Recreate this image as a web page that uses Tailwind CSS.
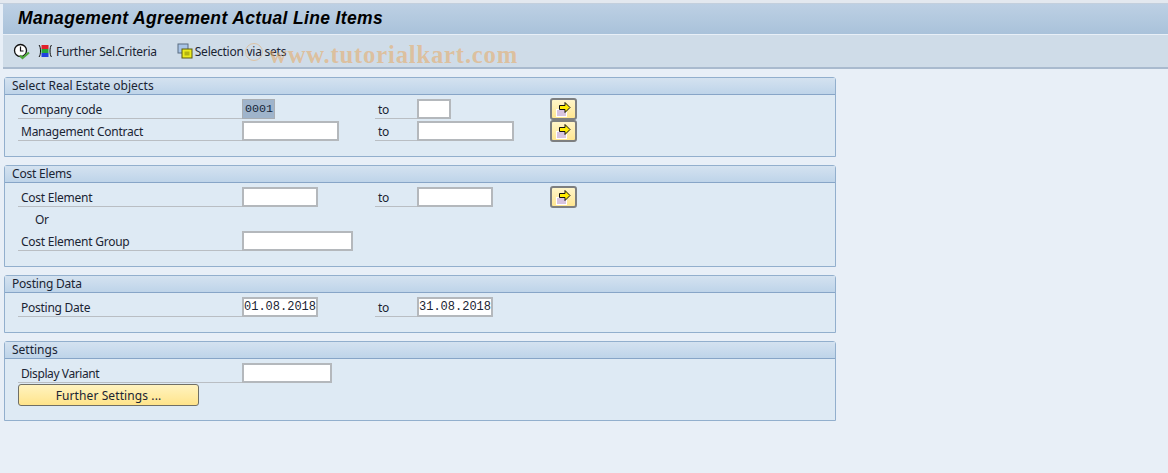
<!DOCTYPE html>
<html lang="en">
<head>
    <meta charset="UTF-8">
    <title>Management Agreement Actual Line Items</title>
    <script src="https://cdn.jsdelivr.net/npm/@tailwindcss/browser@4"></script>
</head>
<body class="relative w-[1168px] h-[473px] overflow-hidden bg-[#e8eff7] font-['Noto_Sans','Liberation_Sans',sans-serif] text-[12px] tracking-[-0.25px] text-[#1a2433]">

    <div class="h-[4px] bg-[#e3e8ef] border-b border-[#c3cfdd]"></div>

    <!-- title bar -->
    <div class="h-[31px] ml-[3px] pb-[2px] bg-gradient-to-b from-[#bdd0e4] to-[#a9c2da] border-b border-[#e8eff7] flex items-center pl-[15px]">
        <h1 class="font-['Liberation_Sans',sans-serif] text-[17.5px] font-bold italic text-black tracking-[0.35px]">Management Agreement Actual Line Items</h1>
    </div>

    <!-- toolbar -->
    <div class="h-[34px] ml-[3px] bg-[#cfdce8] border-b-2 border-[#a9bace] flex items-center">
        <svg class="ml-[10px] w-[17px] h-[17px]" viewBox="0 0 17 17">
            <circle cx="7.500" cy="7.500" r="6" fill="#fff" stroke="#111" stroke-width="1.300"/>
            <path d="M7.500 3.500v4.500h3" fill="none" stroke="#111" stroke-width="1.200"/>
            <path d="M7 12.500l2.500 2.500 6.500-5.500" fill="none" stroke="#4ea83a" stroke-width="2.200"/>
        </svg>
        <svg class="ml-[7px] w-[16px] h-[16px]" viewBox="0 0 16 16">
            <path d="M2 2c2 2 2 10 0 12M14.500 2c-2 2-2 10 0 12" fill="none" stroke="#111"/>
            <rect x="4.500" y="2" width="7" height="4" fill="#e0202a"/>
            <rect x="4.500" y="6" width="7" height="4" fill="#25a83a"/>
            <rect x="4.500" y="10" width="7" height="4" fill="#2040e0"/>
        </svg>
        <span class="ml-[3px] mt-[1px]">Further Sel.Criteria</span>
        <svg class="ml-[20px] w-[16px] h-[16px]" viewBox="0 0 16 16">
            <rect x="1" y="1" width="10" height="9" fill="#a9c4e6" stroke="#5a6c80"/>
            <rect x="5" y="6" width="10" height="9" fill="#ecec1e" stroke="#5a5a10"/>
            <rect x="7.500" y="8.500" width="5" height="4" fill="#b3b312"/>
        </svg>
        <span class="ml-[2px] mt-[1px]">Selection via sets</span>
    </div>

    <!-- Select Real Estate objects -->
    <section class="ml-[4px] mt-[8px] w-[832px] h-[80px] border border-[#92afcd] rounded-t-[3px] bg-[#deeaf4]">
        <div class="h-[17px] pl-[7px] flex items-center tracking-normal bg-gradient-to-b from-[#d4e2f0] to-[#bed4e9] border-b border-[#87a5c7]">Select Real Estate objects</div>
        <div class="mt-[3px] ml-[13px] grid grid-cols-[224px_133px_42px_133px_27px] auto-rows-[22px]">
            <div class="border-b border-[#b9bec3] pl-[3px] h-[21px] leading-[24px]">Company code</div>
            <div><div class="mt-[1px] w-[33px] h-[20px] border border-[#a9aeb3] bg-[#9fb4cb] pl-[2px] font-['Liberation_Mono',monospace] text-[11.7px] tracking-normal leading-[18px] text-[#16263a]">0001</div></div>
            <div class="border-b border-[#b9bec3] pl-[3px] h-[21px] leading-[24px]">to</div>
            <div><div class="mt-[1px] w-[34px] h-[20px] border-2 border-[#b4b8bc] bg-white"></div></div>
            <button class="w-[27px] h-[22px] border-2 border-[#7d7f80] rounded-[3px] bg-gradient-to-b from-[#fff5c8] to-[#ffe690] flex items-center justify-center">
                <svg class="w-[15px] h-[15px]" viewBox="0 0 15 15"><rect x="0.500" y="7.500" width="10" height="7" fill="#d8c4e0" stroke="#fff"/><path d="M3.500 3.500H9V.5L14 5.500 9 10.500V7.500H3.500Z" fill="#ffec00" stroke="#111"/></svg>
            </button>
            <div class="border-b border-[#b9bec3] pl-[3px] h-[21px] leading-[24px]">Management Contract</div>
            <div><div class="mt-[1px] w-[97px] h-[20px] border-2 border-[#b4b8bc] bg-white"></div></div>
            <div class="border-b border-[#b9bec3] pl-[3px] h-[21px] leading-[24px]">to</div>
            <div><div class="mt-[1px] w-[97px] h-[20px] border-2 border-[#b4b8bc] bg-white"></div></div>
            <button class="w-[27px] h-[22px] border-2 border-[#7d7f80] rounded-[3px] bg-gradient-to-b from-[#fff5c8] to-[#ffe690] flex items-center justify-center">
                <svg class="w-[15px] h-[15px]" viewBox="0 0 15 15"><rect x="0.500" y="7.500" width="10" height="7" fill="#d8c4e0" stroke="#fff"/><path d="M3.500 3.500H9V.5L14 5.500 9 10.500V7.500H3.500Z" fill="#ffec00" stroke="#111"/></svg>
            </button>
        </div>
    </section>

    <!-- Cost Elems -->
    <section class="ml-[4px] mt-[8px] w-[832px] h-[102px] border border-[#92afcd] rounded-t-[3px] bg-[#deeaf4]">
        <div class="h-[17px] pl-[7px] flex items-center tracking-[-0.2px] bg-gradient-to-b from-[#d4e2f0] to-[#bed4e9] border-b border-[#87a5c7]">Cost Elems</div>
        <div class="mt-[3px] ml-[13px] grid grid-cols-[224px_133px_42px_133px_27px] auto-rows-[22px]">
            <div class="border-b border-[#b9bec3] pl-[3px] h-[21px] leading-[24px]">Cost Element</div>
            <div><div class="mt-[1px] w-[76px] h-[20px] border-2 border-[#b4b8bc] bg-white"></div></div>
            <div class="border-b border-[#b9bec3] pl-[3px] h-[21px] leading-[24px]">to</div>
            <div><div class="mt-[1px] w-[76px] h-[20px] border-2 border-[#b4b8bc] bg-white"></div></div>
            <button class="w-[27px] h-[22px] border-2 border-[#7d7f80] rounded-[3px] bg-gradient-to-b from-[#fff5c8] to-[#ffe690] flex items-center justify-center">
                <svg class="w-[15px] h-[15px]" viewBox="0 0 15 15"><rect x="0.500" y="7.500" width="10" height="7" fill="#d8c4e0" stroke="#fff"/><path d="M3.500 3.500H9V.5L14 5.500 9 10.500V7.500H3.500Z" fill="#ffec00" stroke="#111"/></svg>
            </button>
            <div class="col-span-5 pl-[17px] leading-[24px]">Or</div>
            <div class="border-b border-[#b9bec3] pl-[3px] h-[21px] leading-[24px]">Cost Element Group</div>
            <div><div class="mt-[1px] w-[111px] h-[20px] border-2 border-[#b4b8bc] bg-white"></div></div>
        </div>
    </section>

    <!-- Posting Data -->
    <section class="ml-[4px] mt-[8px] w-[832px] h-[58px] border border-[#92afcd] rounded-t-[3px] bg-[#deeaf4]">
        <div class="h-[17px] pl-[7px] flex items-center tracking-[-0.2px] bg-gradient-to-b from-[#d4e2f0] to-[#bed4e9] border-b border-[#87a5c7]">Posting Data</div>
        <div class="mt-[3px] ml-[13px] grid grid-cols-[224px_133px_42px_133px_27px] auto-rows-[22px]">
            <div class="border-b border-[#b9bec3] pl-[3px] h-[21px] leading-[24px]">Posting Date</div>
            <div><div class="mt-[1px] w-[76px] h-[20px] border-2 border-[#b4b8bc] bg-white font-['Liberation_Mono',monospace] tracking-normal leading-[17px]">01.08.2018</div></div>
            <div class="border-b border-[#b9bec3] pl-[3px] h-[21px] leading-[24px]">to</div>
            <div><div class="mt-[1px] w-[76px] h-[20px] border-2 border-[#b4b8bc] bg-white font-['Liberation_Mono',monospace] tracking-normal leading-[17px]">31.08.2018</div></div>
        </div>
    </section>

    <!-- Settings -->
    <section class="ml-[4px] mt-[8px] w-[832px] h-[80px] border border-[#92afcd] rounded-t-[3px] bg-[#deeaf4]">
        <div class="h-[17px] pl-[7px] flex items-center tracking-normal bg-gradient-to-b from-[#d4e2f0] to-[#bed4e9] border-b border-[#87a5c7]">Settings</div>
        <div class="mt-[3px] ml-[13px] grid grid-cols-[224px_133px_42px_133px_27px] auto-rows-[22px]">
            <div class="border-b border-[#b9bec3] pl-[3px] h-[21px] leading-[24px] tracking-[-0.4px]">Display Variant</div>
            <div><div class="mt-[1px] w-[90px] h-[20px] border-2 border-[#b4b8bc] bg-white"></div></div>
            <button class="col-span-5 w-[181px] h-[22px] border border-[#6f6f66] rounded-[3px] bg-gradient-to-b from-[#fff3bf] to-[#ffe48a] text-center tracking-[0.1px] leading-[22px]">Further Settings ...</button>
        </div>
    </section>

    <!-- watermark -->
    <div class="absolute left-[245px] top-[43px] w-[18px] h-[18px] rounded-full border border-[#e8a860]/50"></div>
    <div class="absolute left-[269px] top-[36px] font-['Liberation_Serif',serif] text-[24.7px] font-bold tracking-[0.8px] text-[#e8a860]/55">www.tutorialkart.com</div>
</body>
</html>
